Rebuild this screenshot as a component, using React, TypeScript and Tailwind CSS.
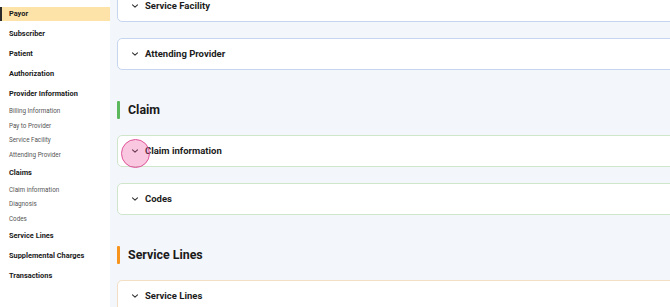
import React from 'react';

type NavItem = { label: string; sub?: boolean; active?: boolean };

const nav: NavItem[] = [
  { label: 'Payor', active: true },
  { label: 'Subscriber' },
  { label: 'Patient' },
  { label: 'Authorization' },
  { label: 'Provider Information' },
  { label: 'Billing Information', sub: true },
  { label: 'Pay to Provider', sub: true },
  { label: 'Service Facility', sub: true },
  { label: 'Attending Provider', sub: true },
  { label: 'Claims' },
  { label: 'Claim information', sub: true },
  { label: 'Diagnosis', sub: true },
  { label: 'Codes', sub: true },
  { label: 'Service Lines' },
  { label: 'Supplemental Charges' },
  { label: 'Transactions' },
];

function Chevron() {
  return (
    <svg width="8" height="8" viewBox="0 0 8 8" fill="none" className="shrink-0">
      <path d="M1.5 2.8 L4 5.2 L6.5 2.8" stroke="#333" strokeWidth="1.1" strokeLinecap="round" strokeLinejoin="round" />
    </svg>
  );
}

function Card({ title, border }: { title: string; border: string }) {
  return (
    <div className={`h-[32px] w-[600px] shrink-0 rounded-[5px] border bg-white flex items-center pl-[13px] gap-[6px] ${border}`}>
      <Chevron />
      <span className="text-[9.5px] leading-none font-bold text-[#1c1c1c]">{title}</span>
    </div>
  );
}

function Heading({ title, bar }: { title: string; bar: string }) {
  return (
    <div className="h-[18px] shrink-0 flex items-center gap-[8px]">
      <div className={`w-[3px] h-[18px] rounded-[1px] ${bar}`} />
      <span className="text-[12.4px] leading-none font-bold text-[#1a1a1a]">{title}</span>
    </div>
  );
}

export default function App() {
  return (
    <div className="w-[670px] h-[307px] overflow-hidden flex bg-[#f3f6fb]" style={{ fontFamily: 'Roboto, "Noto Sans", sans-serif' }}>
      {/* Sidebar */}
      <aside className="w-[110px] shrink-0 h-full bg-white pt-[7px] flex flex-col">
        {nav.map((n) =>
          n.active ? (
            <div key={n.label} className="h-[14px] shrink-0 mb-[3px] flex items-center pl-[7px] bg-[#fde3a8] border-l-2 border-[#2b2b2b]">
              <span className="text-[7.4px] leading-none font-bold text-[#1a1a1a]">{n.label}</span>
            </div>
          ) : n.sub ? (
            <div key={n.label} className="h-[14.6px] shrink-0 flex items-center pl-[9px]">
              <span className="text-[6.3px] leading-none text-[#555]">{n.label}</span>
            </div>
          ) : (
            <div key={n.label} className="h-[20px] shrink-0 flex items-center pl-[9px]">
              <span className="text-[7.4px] leading-none font-bold text-[#1a1a1a]">{n.label}</span>
            </div>
          )
        )}
      </aside>

      {/* Main */}
      <main className="relative flex-1 pl-[7px] -mt-[10px] flex flex-col">
        <Card title="Service Facility" border="border-[#c6d6f0]" />
        <div className="h-[16px] shrink-0" />
        <Card title="Attending Provider" border="border-[#c6d6f0]" />
        <div className="h-[31px] shrink-0" />
        <Heading title="Claim" bar="bg-[#5cb85c]" />
        <div className="h-[16px] shrink-0" />
        <Card title="Claim information" border="border-[#cfe6cb]" />
        <div className="h-[16px] shrink-0" />
        <Card title="Codes" border="border-[#cfe6cb]" />
        <div className="h-[31px] shrink-0" />
        <Heading title="Service Lines" bar="bg-[#f7941d]" />
        <div className="h-[16px] shrink-0" />
        <Card title="Service Lines" border="border-[#f3dfc3]" />

        {/* click indicator */}
        <div className="absolute left-[11px] top-[149px] w-[29px] h-[29px] rounded-full bg-[#ec4899]/30 border-[1.5px] border-[#e0559b]" />
      </main>
    </div>
  );
}
